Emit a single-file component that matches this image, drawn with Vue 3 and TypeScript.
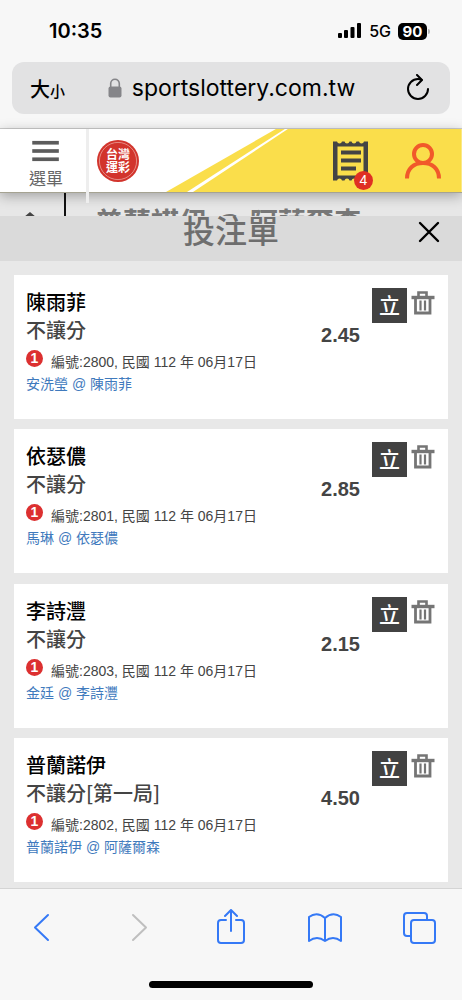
<script setup lang="ts">
interface Bet {
  id: string
  pick: string
  market: string
  match: string
  odds: string
}

const bets: Bet[] = [
  { id: '2800', pick: '陳雨菲', market: '不讓分', match: '安洗瑩 @ 陳雨菲', odds: '2.45' },
  { id: '2801', pick: '依瑟儂', market: '不讓分', match: '馬琳 @ 依瑟儂', odds: '2.85' },
  { id: '2803', pick: '李詩灃', market: '不讓分', match: '金廷 @ 李詩灃', odds: '2.15' },
  { id: '2802', pick: '普蘭諾伊', market: '不讓分[第一局]', match: '普蘭諾伊 @ 阿薩爾森', odds: '4.50' },
]
</script>

<template>
  <div class="page">
    <header class="browser">
      <div class="status">
        <span class="time">10:35</span>
        <div class="signals">
          <svg width="24" height="16" viewBox="0 0 24 16" aria-hidden="true">
            <rect x="0" y="10" width="4" height="5" rx="1" />
            <rect x="6" y="7" width="4" height="8" rx="1" />
            <rect x="12.500" y="4" width="4" height="11" rx="1" />
            <rect x="19" y="0" width="4" height="15" rx="1" />
          </svg>
          <span class="network">5G</span>
          <span class="battery">90</span>
        </div>
      </div>
      <div class="address">
        <button class="text-size" type="button" aria-label="文字大小">大<small>小</small></button>
        <div class="url">
          <svg width="14" height="20" viewBox="0 0 14 20" aria-hidden="true">
            <path d="M2.700 9V5.500a4.300 4.300 0 0 1 8.600 0V9" fill="none" stroke="#858589" stroke-width="1.600" />
            <rect x="0.500" y="8.500" width="13" height="11" rx="2" fill="#858589" />
          </svg>
          <span>sportslottery.com.tw</span>
        </div>
        <button class="reload" type="button" aria-label="重新載入">
          <svg width="24" height="28" viewBox="0 0 24 28" fill="none" stroke="#000" stroke-width="2" stroke-linecap="round" stroke-linejoin="round">
            <path d="M15.500 6Q13.500 5 12 5A10 10 0 1 0 22 15" />
            <path d="M11 1l5 5-5 5" />
          </svg>
        </button>
      </div>
    </header>

    <nav class="site">
      <svg class="swoosh" viewBox="0 0 296 63" preserveAspectRatio="none" aria-hidden="true">
        <path d="M0 63L110 0H296V63Z" fill="#fade4b" />
        <path d="M21 63L119 0H122L27 63Z" fill="#fff" />
      </svg>
      <button class="menu" type="button">
        <svg width="30" height="24" viewBox="0 0 30 24" fill="#5c5c5c" aria-hidden="true">
          <rect x="0" y="1" width="29" height="4" />
          <rect x="0" y="10" width="29" height="4" />
          <rect x="0" y="19" width="29" height="4" />
        </svg>
        <span>選單</span>
      </button>
      <a class="logo" href="#" aria-label="台灣運彩">
        <svg width="42" height="42" viewBox="0 0 42 42">
          <circle cx="21" cy="21" r="21" fill="#d2342c" />
          <circle cx="21" cy="21" r="18.600" fill="none" stroke="#eeb0a9" stroke-width="0.700" />
          <g class="seal" fill="#fff" text-anchor="middle">
            <text x="21" y="19">台灣</text>
            <text x="21" y="32">運彩</text>
          </g>
        </svg>
      </a>
      <div class="tools">
        <button class="slip" type="button" aria-label="投注單">
          <svg width="35" height="40" viewBox="0 0 35 40">
            <path d="M0 0.500H4Q4.500 2.500 6.500 2.500T9 0.500H11.500Q12 2.500 14 2.500T16.500 0.500H18.500Q19 2.500 21 2.500T23.500 0.500H26Q26.500 2.500 28.500 2.500T31 0.500H35V39.500H31Q30.500 37.500 28.500 37.500T26 39.500H23.500Q23 37.500 21 37.500T18.500 39.500H16.500Q16 37.500 14 37.500T11.500 39.500H9Q8.500 37.500 6.500 37.500T4 39.500H0Z" fill="#444" />
            <rect x="4.500" y="5.500" width="26" height="29" fill="#fade4b" />
            <path d="M8 11.500H28M8 19.500H28M8 27.500H23" stroke="#444" stroke-width="4" />
          </svg>
          <span class="badge">4</span>
        </button>
        <button class="account" type="button" aria-label="會員">
          <svg width="36" height="36" viewBox="0 0 36 36" fill="none" stroke="#f1592a" stroke-width="4">
            <circle cx="18" cy="11" r="9" />
            <path d="M2 35.500C2 25.500 9 20 18 20S34 25.500 34 35.500" />
          </svg>
        </button>
      </div>
    </nav>

    <div class="behind" aria-hidden="true">
      <div class="behind-back">
        <svg width="14" height="14" viewBox="0 0 14 14" fill="none" stroke="#444" stroke-width="3"><path d="M0 7L6 2L12 7" /></svg>
      </div>
      <div class="behind-title">普蘭諾伊 @ 阿薩爾森</div>
    </div>

    <main class="sheet">
      <div class="sheet-head">
        <h1>投注單</h1>
        <button type="button" aria-label="關閉">
          <svg width="22" height="22" viewBox="0 0 22 22" stroke="#000" stroke-width="2.400" stroke-linecap="round">
            <path d="M2 2L20 20M20 2L2 20" />
          </svg>
        </button>
      </div>
      <ul class="bets">
        <li v-for="bet in bets" :key="bet.id" class="bet">
          <div class="info">
            <h2>{{ bet.pick }}</h2>
            <p class="market">{{ bet.market }}</p>
            <p class="meta">
              <span class="count">1</span>
              <span>編號:{{ bet.id }}, 民國 112 年 06月17日</span>
            </p>
            <a href="#">{{ bet.match }}</a>
          </div>
          <strong class="odds">{{ bet.odds }}</strong>
          <div class="actions">
            <button class="banker" type="button">立</button>
            <button class="trash" type="button" aria-label="刪除">
              <svg width="24" height="24" viewBox="0 0 24 24" fill="none" stroke="#757575">
                <path d="M7.500 5V1.500H15.500V5" stroke-width="2.600" />
                <path d="M0.500 6.500H23.500" stroke-width="3.400" />
                <path d="M4.500 7V22H19V7" stroke-width="2.800" />
                <path d="M9.500 9.500V19.500M14 9.500V19.500" stroke-width="2.200" />
              </svg>
            </button>
          </div>
        </li>
      </ul>
    </main>

    <footer class="toolbar">
      <div class="buttons">
        <button type="button" aria-label="上一頁">
          <svg viewBox="0 0 44 36"><path d="M28 6L15 18.500L28 31" /></svg>
        </button>
        <button class="off" type="button" aria-label="下一頁" disabled>
          <svg viewBox="0 0 44 36"><path d="M18 6L31 18.500L18 31" /></svg>
        </button>
        <button type="button" aria-label="分享">
          <svg viewBox="0 0 44 36"><path d="M17 11H12Q9 11 9 14V31Q9 34 12 34H32Q35 34 35 31V14Q35 11 32 11H27M22 22V1M16 7L22 1L28 7" /></svg>
        </button>
        <button type="button" aria-label="書籤">
          <svg viewBox="0 0 44 36"><path d="M21 9Q13 2 5 8V32Q13 26 21 32Q29 26 37 32V8Q29 2 21 9V32" /></svg>
        </button>
        <button type="button" aria-label="分頁">
          <svg viewBox="0 0 44 36"><path d="M13 27H9Q6 27 6 24V7Q6 4 9 4H26Q29 4 29 7V11" /><rect x="13" y="11" width="24" height="23" rx="3" /></svg>
        </button>
      </div>
      <div class="home"></div>
    </footer>
  </div>
</template>

<style>
body {
  margin: 0;
}
</style>

<style scoped>
* {
  box-sizing: border-box;
}
.page {
  display: flex;
  flex-direction: column;
  min-height: 100vh;
  background: #e8e8e8;
  font-family: "Liberation Sans", "Noto Sans CJK TC", sans-serif;
  color: #444;
}
button {
  border: 0;
  padding: 0;
  margin: 0;
  background: none;
  color: inherit;
  font: inherit;
  cursor: pointer;
}
svg {
  display: block;
}
h1,
h2,
p,
ul {
  margin: 0;
  padding: 0;
}
.browser {
  background: #f7f7f7;
  border-bottom: 1px solid #cdcdcd;
  padding: 0 12px 14px;
  color: #000;
  font-family: Inter, "Noto Sans CJK TC", sans-serif;
}
.status {
  display: flex;
  justify-content: space-between;
  align-items: center;
  height: 62px;
  padding: 0 23px 0 37px;
}
.time {
  font-size: 20px;
  font-weight: 600;
}
.signals {
  display: flex;
  align-items: center;
  gap: 7px;
}
.network {
  font-size: 16px;
  font-weight: 500;
}
.battery {
  position: relative;
  width: 29px;
  height: 17px;
  border-radius: 5px;
  background: #000;
  color: #fff;
  font-size: 15px;
  font-weight: 700;
  line-height: 17px;
  text-align: center;
}
.battery::after {
  content: "";
  position: absolute;
  right: -3px;
  top: 6px;
  width: 2px;
  height: 5px;
  border-radius: 0 2px 2px 0;
  background: #b5b5b5;
}
.address {
  display: flex;
  align-items: center;
  height: 52px;
  padding: 0 20px 0 18px;
  border-radius: 12px;
  background: #e2e2e3;
}
.text-size {
  font-size: 20px;
  font-weight: 500;
}
.text-size small {
  font-size: 15px;
}
.url {
  display: flex;
  flex: 1;
  align-items: center;
  justify-content: center;
  gap: 10px;
  padding-right: 8px;
  font-size: 23px;
}
.site {
  position: relative;
  z-index: 1;
  display: flex;
  align-items: center;
  height: 64px;
  background: #fff;
  border-bottom: 1px solid #a5a392;
  box-shadow: 0 3px 12px rgba(0, 0, 0, 0.3);
}
.swoosh {
  position: absolute;
  right: 0;
  top: 0;
  width: 64%;
  height: 100%;
}
.menu {
  position: relative;
  display: flex;
  flex-direction: column;
  align-items: center;
  width: 89px;
  height: 63px;
  padding: 11px 0 0 3px;
  font-size: 17px;
  line-height: 24px;
  gap: 6px;
  color: #666;
}
.menu::after {
  content: "";
  position: absolute;
  right: 0;
  top: 0;
  width: 3px;
  height: 74px;
  background: #eee;
}
.logo {
  margin-left: 8px;
}
.seal {
  font: 700 12px "Noto Sans CJK TC", sans-serif;
}
.tools {
  position: relative;
  display: flex;
  align-items: center;
  gap: 37px;
  margin-left: auto;
  padding-right: 21px;
}
.slip {
  position: relative;
}
.badge {
  position: absolute;
  right: -5px;
  bottom: -9px;
  width: 19px;
  height: 19px;
  border-radius: 50%;
  background: #df3023;
  color: #fff;
  font-size: 14px;
  line-height: 19px;
}
.behind {
  display: flex;
  height: 23px;
  overflow: hidden;
  background: #e7e7e7;
}
.behind-back {
  width: 66px;
  padding: 19px 0 0 24px;
  border-right: 2px solid #111;
}
.behind-title {
  padding: 15px 0 0 29px;
  font-size: 28px;
  font-weight: 700;
  line-height: 32px;
  color: #777;
  white-space: nowrap;
}
.sheet {
  display: flex;
  flex: 1;
  flex-direction: column;
}
.sheet-head {
  display: grid;
  grid-template-columns: 1fr auto 1fr;
  align-items: center;
  padding: 0 22px 13px;
  background: #dadada;
}
.sheet-head h1 {
  grid-column: 2;
  font-size: 32px;
  font-weight: 500;
  line-height: 32px;
  color: #6e6e6e;
}
.sheet-head button {
  justify-self: end;
}
.bets {
  display: flex;
  flex: 1;
  flex-direction: column;
  justify-content: space-between;
  padding: 14px 14px 6px;
  list-style: none;
}
.bet {
  display: grid;
  grid-template-columns: 1fr auto auto;
  gap: 12px;
  min-height: 144px;
  padding: 13px 13px 12px 12px;
  background: #fff;
}
.info {
  padding-top: 1px;
}
.bet h2 {
  font-size: 20px;
  font-weight: 500;
  line-height: 28px;
  color: #000;
}
.market {
  font-family: "Noto Sans CJK TC", sans-serif;
  font-size: 20px;
  font-weight: 500;
  line-height: 26px;
}
.meta {
  display: flex;
  gap: 8px;
  margin-top: 7px;
  font-size: 14px;
  line-height: 24px;
  white-space: nowrap;
}
.count {
  width: 17px;
  height: 17px;
  border-radius: 50%;
  background: #dc3030;
  color: #fff;
  font-weight: 700;
  line-height: 17px;
  text-align: center;
}
.info a {
  display: block;
  font-size: 14px;
  line-height: 20px;
  color: #3f7abd;
  text-decoration: none;
}
.odds {
  padding-top: 33px;
  font-size: 20px;
  line-height: 28px;
}
.actions {
  display: flex;
  align-items: flex-start;
  gap: 4px;
}
.banker {
  width: 35px;
  height: 35px;
  background: #424242;
  color: #fff;
  font-size: 21px;
  font-weight: 500;
  line-height: 35px;
}
.trash {
  padding-top: 3px;
}
.toolbar {
  display: flex;
  flex-direction: column;
  align-items: center;
  gap: 36px;
  padding: 20px 20px 12px;
  background: #f7f7f7;
  border-top: 1px solid #d4d4d4;
}
.buttons {
  display: flex;
  align-self: stretch;
  justify-content: space-between;
}
.buttons svg {
  width: 44px;
  height: 36px;
  fill: none;
  stroke: #3579f6;
  stroke-width: 2;
  stroke-linecap: round;
  stroke-linejoin: round;
}
.buttons .off svg {
  stroke: #bfbfbf;
}
.home {
  width: 39%;
  height: 7px;
  border-radius: 4px;
  background: #000;
}
</style>
